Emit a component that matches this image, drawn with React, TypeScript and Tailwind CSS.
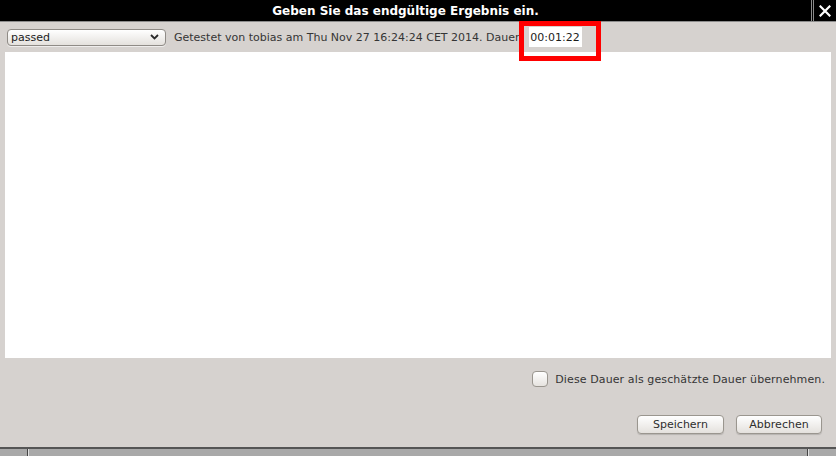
import React from "react";

const font = { fontFamily: '"DejaVu Sans", "Liberation Sans", sans-serif' };

export default function App() {
  return (
    <div
      className="relative w-[836px] h-[456px] bg-[#d6d2cf] flex flex-col overflow-hidden text-[#2e2e2e]"
      style={font}
    >
      {/* Title bar */}
      <div className="h-[22px] flex bg-black border-b border-[#8c8c8c]">
        <div className="flex-1 flex items-center justify-center border-r border-[#8c8c8c]">
          <span className="text-white font-bold text-[12px] leading-none">
            Geben Sie das endgültige Ergebnis ein.
          </span>
        </div>
        <div className="w-[23px] ml-[1px] flex items-center justify-center border-l border-[#8c8c8c]">
          <svg width="12" height="12" viewBox="0 0 12 12">
            <path d="M1.5 1.5 L10.5 10.5 M10.5 1.5 L1.5 10.5" stroke="white" strokeWidth="2.2" strokeLinecap="square" />
          </svg>
        </div>
      </div>

      {/* Toolbar row */}
      <div className="h-[30px] flex items-center pl-[7px]">
        <div className="w-[159px] h-[17px] rounded-[4px] border border-[#8f8b86] bg-gradient-to-b from-white to-[#e4e1dd] flex items-center pl-[3px] pr-[6px] shadow-[0_1px_0_rgba(255,255,255,0.6)]">
          <span className="flex-1 text-[11px] leading-none text-[#1c1c1c]">passed</span>
          <svg width="9" height="6" viewBox="0 0 9 6">
            <path d="M1 1 L4.5 4.5 L8 1" fill="none" stroke="#2a2a2a" strokeWidth="1.8" />
          </svg>
        </div>
        <span className="ml-[8px] text-[11px] leading-none text-[#353535]">
          Getestet von tobias am Thu Nov 27 16:24:24 CET 2014. Dauer
        </span>
        <div className="ml-[9px] h-[20px] w-[53px] bg-white flex items-center justify-center text-[11px] leading-none text-[#1c1c1c]">
          00:01:22
        </div>
      </div>

      {/* Text area */}
      <div className="mx-[5px] h-[306px] bg-white" />

      {/* Checkbox row */}
      <div className="mt-[13px] h-[16px] flex items-center justify-end pr-[11px]">
        <div className="w-[16px] h-[16px] rounded-[4px] border border-[#9a968f] bg-gradient-to-b from-white to-[#e6e3df]" />
        <span className="ml-[7px] text-[11px] leading-none tracking-[0.11px] text-[#353535]">
          Diese Dauer als geschätzte Dauer übernehmen.
        </span>
      </div>

      {/* Buttons */}
      <div className="mt-[28px] h-[19px] flex justify-end gap-[12px] pr-[14px]">
        <button className="w-[87px] h-[19px] rounded-[4px] border border-[#9a968f] bg-gradient-to-b from-white to-[#e4e1dd] text-[11px] leading-none text-[#2e2e2e] shadow-[0_1px_1px_rgba(0,0,0,0.15)]">
          Speichern
        </button>
        <button className="w-[86px] h-[19px] rounded-[4px] border border-[#9a968f] bg-gradient-to-b from-white to-[#e4e1dd] text-[11px] leading-none text-[#2e2e2e] shadow-[0_1px_1px_rgba(0,0,0,0.15)]">
          Abbrechen
        </button>
      </div>

      <div className="flex-1" />

      {/* Bottom strip */}
      <div className="h-[9px] border-t-2 border-[#555555] bg-[#a9a9a9] flex">
        <div className="w-[28px] border-r border-[#444]" />
        <div className="flex-1 border-l border-[#e0e0e0] border-r border-r-[#444]" />
        <div className="w-[28px] border-l border-[#e0e0e0]" />
      </div>

      {/* Red highlight overlay */}
      <div className="absolute left-[519px] top-[21px] w-[82px] h-[40px] border-[5px] border-[#ff0000]" />
    </div>
  );
}
